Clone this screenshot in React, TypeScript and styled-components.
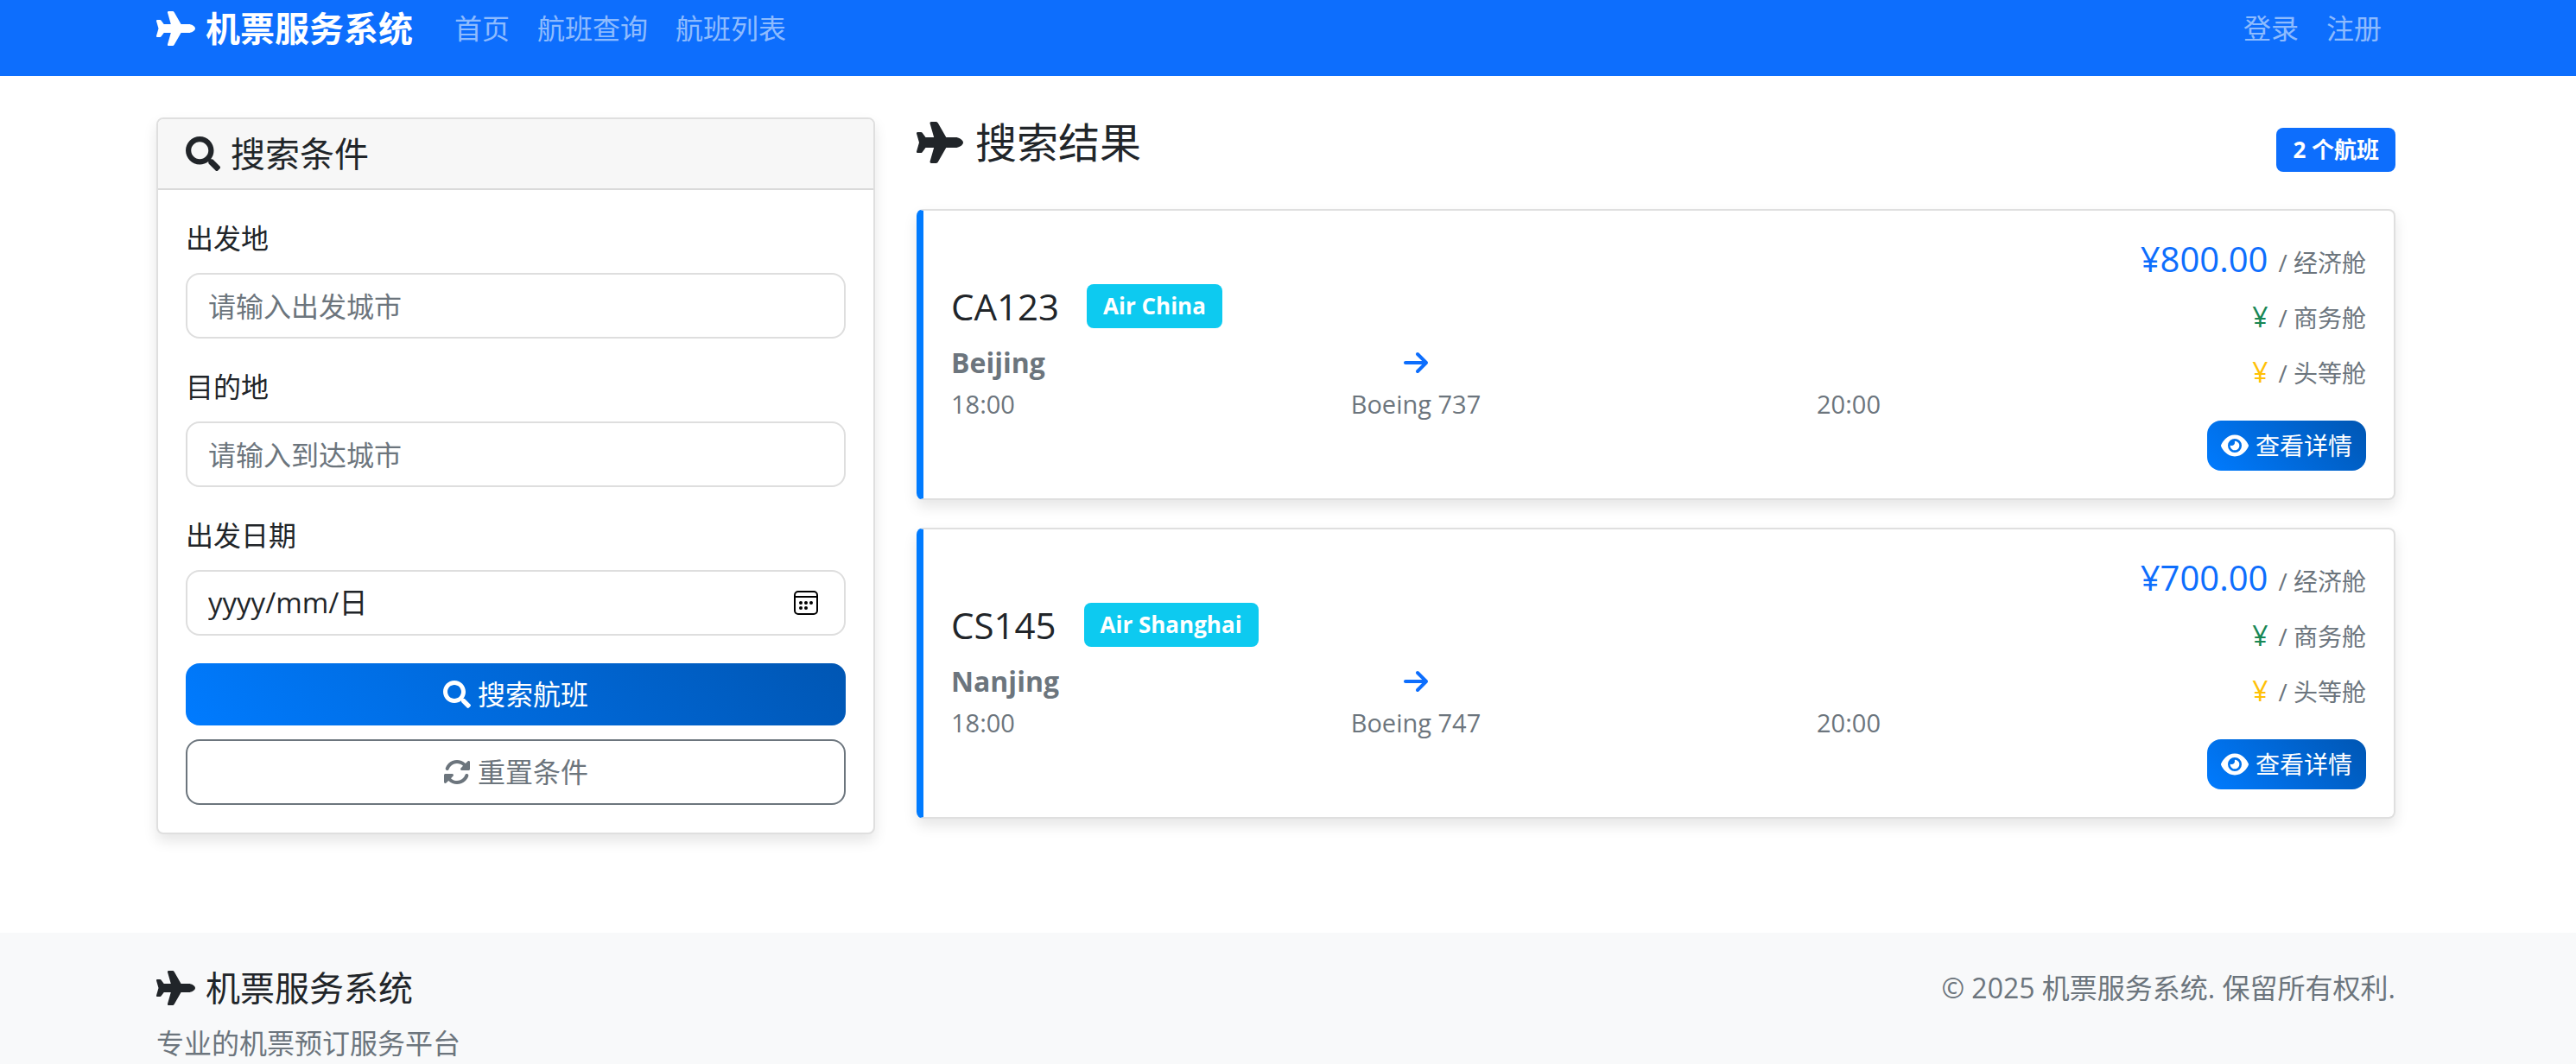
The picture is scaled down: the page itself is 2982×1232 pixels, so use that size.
import React from 'react';
import styled, { createGlobalStyle, css } from 'styled-components';
import { FaSearch } from 'react-icons/fa';
import { FaArrowRight, FaEye, FaPlane, FaRotate } from 'react-icons/fa6';

const GlobalStyle = createGlobalStyle`
  *, *::before, *::after { box-sizing: border-box; }
  html { overflow: hidden; }
  body {
    margin: 0;
    background: #fff;
    color: #212529;
    font-family: "Open Sans", "Noto Sans CJK SC", sans-serif;
    font-size: 32px;
    line-height: 48px;
  }
  h1, h2, h3, p { margin: 0; font-weight: 400; }
  svg { flex: none; }
`;

const Container = styled.div`
  width: 100%;
  max-width: 2640px;
  margin: 0 auto;
  padding: 0 24px;
`;

const Page = styled.div`
  padding-right: 28px;
`;

const Bar = styled.header`
  margin-right: -28px;
  padding: 0 28px 22px 0;
  background: #0d6efd;
`;

const BarRow = styled(Container)`
  display: flex;
  align-items: center;
  height: 66px;
`;

const Brand = styled.a`
  display: flex;
  align-items: center;
  gap: 12px;
  margin-right: 32px;
  color: #fff;
  font-size: 40px;
  font-weight: 700;
  text-decoration: none;
`;

const Nav = styled.nav<{ $end?: boolean }>`
  display: flex;
  ${(p) => p.$end && css`margin-left: auto;`}
`;

const NavLink = styled.a`
  padding: 0 16px;
  color: rgba(255, 255, 255, 0.55);
  text-decoration: none;
`;

const Main = styled(Container)`
  display: grid;
  grid-template-columns: calc((100% - 96px) / 3) 1fr;
  gap: 48px;
  align-items: start;
  padding-top: 48px;
`;

const cardBase = css`
  border: 2px solid #dfdfdf;
  border-radius: 8px;
  background: #fff;
  box-shadow: 0 8px 16px rgba(0, 0, 0, 0.1);
`;

const SearchCard = styled.section`
  ${cardBase}
`;

const SearchHeader = styled.div`
  padding: 16px 32px;
  border-bottom: 2px solid #dadada;
  border-radius: 6px 6px 0 0;
  background: #f7f7f7;
`;

const Title = styled.h2`
  display: flex;
  align-items: center;
  gap: 12px;
  font-size: 40px;
  line-height: 48px;
`;

const Form = styled.form`
  display: flex;
  flex-direction: column;
  padding: 32px;
`;

const Label = styled.label`
  margin-bottom: 16px;
`;

const Input = styled.input`
  height: 76px;
  margin-bottom: 32px;
  padding: 0 24px;
  border: 2px solid #dedede;
  border-radius: 16px;
  background: #fff;
  color: #212529;
  font: inherit;
  outline: none;
  &::placeholder { color: #6c757d; opacity: 1; }
`;

const DateField = styled.div`
  display: flex;
  align-items: center;
  height: 76px;
  margin-bottom: 32px;
  padding: 0 30px 0 24px;
  border: 2px solid #dedede;
  border-radius: 16px;
`;

const DateInput = styled.input`
  flex: 1;
  min-width: 0;
  padding: 0;
  border: 0;
  background: none;
  color: #212529;
  font: inherit;
  font-size: 33px;
  outline: none;
  &::placeholder { color: #212529; opacity: 1; }
`;

const PickerButton = styled.button`
  display: flex;
  padding: 0;
  border: 0;
  background: none;
  color: #000;
`;

const Button = styled.button<{ $variant: 'primary' | 'outline' }>`
  display: flex;
  align-items: center;
  justify-content: center;
  gap: 8px;
  border-radius: 16px;
  font: inherit;
  ${(p) => p.$variant === 'primary'
    ? css`
      height: 72px;
      margin-bottom: 16px;
      border: 0;
      background: linear-gradient(45deg, #007bff, #0056b3);
      color: #fff;
    `
    : css`
      height: 76px;
      border: 2px solid #6c757d;
      background: #fff;
      color: #6c757d;
    `}
`;

const DetailLink = styled.a`
  display: inline-flex;
  align-items: center;
  gap: 8px;
  height: 58px;
  margin-top: 16px;
  padding: 0 16px;
  border-radius: 16px;
  background: linear-gradient(45deg, #007bff, #0056b3);
  color: #fff;
  font-size: 28px;
  text-decoration: none;
`;

const Results = styled.section`
  display: flex;
  flex-direction: column;
`;

const ResultsHead = styled.div`
  display: flex;
  align-items: center;
  justify-content: space-between;
  height: 74px;
  margin-bottom: 32px;
`;

const ResultsTitle = styled.h1`
  display: flex;
  align-items: center;
  gap: 14px;
  align-self: flex-start;
  font-size: 48px;
  line-height: 58px;
`;

const Badge = styled.span<{ $tone: string }>`
  padding: 8px 19px;
  border-radius: 8px;
  background: ${(p) => p.$tone};
  color: #fff;
  font-size: 26px;
  font-weight: 700;
  line-height: 35px;
`;

const FlightCard = styled.article`
  ${cardBase}
  display: grid;
  grid-template-columns: calc(100% * 2 / 3 - 16px) 1fr;
  column-gap: 48px;
  align-items: center;
  margin-bottom: 32px;
  padding: 32px;
  border-left: 8px solid #007bff;
`;

const FlightHead = styled.div`
  display: flex;
  align-items: center;
  gap: 32px;
  margin-bottom: 16px;
`;

const FlightNo = styled.h3`
  font-size: 42px;
  line-height: 48px;
`;

const Route = styled.div`
  display: grid;
  grid-template-columns: repeat(3, 1fr);
  column-gap: 48px;
  color: #6c757d;
`;

const Stop = styled.div<{ $align: 'start' | 'center' | 'end' }>`
  display: flex;
  flex-direction: column;
  align-items: ${(p) => p.$align};
`;

const City = styled.strong`
  height: 48px;
  font-weight: 700;
`;

const ArrowBox = styled.span`
  display: flex;
  align-items: center;
  height: 48px;
  color: #0d6efd;
`;

const Detail = styled.span`
  color: #6c757d;
  font-size: 29px;
`;

const Cabin = styled.span`
  color: #6c757d;
  font-size: 28px;
`;

const Prices = styled.div`
  display: flex;
  flex-direction: column;
  align-items: flex-end;
`;

const Price = styled.div<{ $tone: string; $large?: boolean }>`
  display: flex;
  align-items: baseline;
  gap: 12px;
  height: ${(p) => (p.$large ? 51 : 48)}px;
  margin-bottom: 16px;
  color: ${(p) => p.$tone};
  font-size: ${(p) => (p.$large ? 40 : 32)}px;
`;

const Footer = styled.footer`
  margin: 100px -28px 0 0;
  padding: 40px 28px 48px 0;
  background: #f8f9fa;
`;

const FooterRow = styled(Container)`
  display: flex;
  justify-content: space-between;
`;

const FooterTitle = styled(Title)`
  margin-bottom: 16px;
`;

const Muted = styled.p`
  color: #6c757d;
`;

const CalendarIcon = () => (
  <svg width="28" height="28" viewBox="0 0 28 28" fill="none" aria-hidden="true">
    <rect x="1" y="1" width="26" height="26" rx="4" stroke="currentColor" strokeWidth="2" />
    <path d="M1 7h26" stroke="currentColor" strokeWidth="2" />
    <g fill="currentColor">
      <circle cx="8" cy="14" r="2" />
      <circle cx="14" cy="14" r="2" />
      <circle cx="20" cy="14" r="2" />
      <circle cx="8" cy="20" r="2" />
      <circle cx="14" cy="20" r="2" />
    </g>
  </svg>
);

const Plane = styled(FaPlane)<{ $size: number }>`
  width: ${(p) => p.$size * 1.125}px;
  height: ${(p) => p.$size}px;
`;

const flights = [
  { no: 'CA123', airline: 'Air China', from: 'Beijing', to: '', depart: '18:00', arrive: '20:00', plane: 'Boeing 737', price: '800.00' },
  { no: 'CS145', airline: 'Air Shanghai', from: 'Nanjing', to: '', depart: '18:00', arrive: '20:00', plane: 'Boeing 747', price: '700.00' },
];

export default function App() {
  return (
    <Page>
      <GlobalStyle />
      <Bar>
        <BarRow>
          <Brand href="#"><Plane $size={40} />机票服务系统</Brand>
          <Nav>
            <NavLink href="#">首页</NavLink>
            <NavLink href="#">航班查询</NavLink>
            <NavLink href="#">航班列表</NavLink>
          </Nav>
          <Nav $end>
            <NavLink href="#">登录</NavLink>
            <NavLink href="#">注册</NavLink>
          </Nav>
        </BarRow>
      </Bar>
      <Main as="main">
        <SearchCard>
          <SearchHeader>
            <Title><FaSearch size={40} />搜索条件</Title>
          </SearchHeader>
          <Form>
            <Label htmlFor="from">出发地</Label>
            <Input id="from" type="text" placeholder="请输入出发城市" />
            <Label htmlFor="to">目的地</Label>
            <Input id="to" type="text" placeholder="请输入到达城市" />
            <Label htmlFor="date">出发日期</Label>
            <DateField>
              <DateInput id="date" type="text" placeholder="yyyy/mm/日" />
              <PickerButton type="button" aria-label="选择日期"><CalendarIcon /></PickerButton>
            </DateField>
            <Button type="button" $variant="primary"><FaSearch size={32} />搜索航班</Button>
            <Button type="reset" $variant="outline"><FaRotate size={32} />重置条件</Button>
          </Form>
        </SearchCard>
        <Results>
          <ResultsHead>
            <ResultsTitle><Plane $size={48} />搜索结果</ResultsTitle>
            <Badge $tone="#0d6efd">2 个航班</Badge>
          </ResultsHead>
          {flights.map((f) => (
            <FlightCard key={f.no}>
              <div>
                <FlightHead>
                  <FlightNo>{f.no}</FlightNo>
                  <Badge $tone="#0dcaf0">{f.airline}</Badge>
                </FlightHead>
                <Route>
                  <Stop $align="start">
                    <City>{f.from}</City>
                    <Detail>{f.depart}</Detail>
                  </Stop>
                  <Stop $align="center">
                    <ArrowBox><FaArrowRight size={32} /></ArrowBox>
                    <Detail>{f.plane}</Detail>
                  </Stop>
                  <Stop $align="end">
                    <City>{f.to}</City>
                    <Detail>{f.arrive}</Detail>
                  </Stop>
                </Route>
              </div>
              <Prices>
                <Price $tone="#0d6efd" $large>¥{f.price}<Cabin>/ 经济舱</Cabin></Price>
                <Price $tone="#198754">¥<Cabin>/ 商务舱</Cabin></Price>
                <Price $tone="#ffc107">¥<Cabin>/ 头等舱</Cabin></Price>
                <DetailLink href="#"><FaEye size={32} />查看详情</DetailLink>
              </Prices>
            </FlightCard>
          ))}
        </Results>
      </Main>
      <Footer>
        <FooterRow>
          <div>
            <FooterTitle><Plane $size={40} />机票服务系统</FooterTitle>
            <Muted>专业的机票预订服务平台</Muted>
          </div>
          <Muted>© 2025 机票服务系统. 保留所有权利.</Muted>
        </FooterRow>
      </Footer>
    </Page>
  );
}
